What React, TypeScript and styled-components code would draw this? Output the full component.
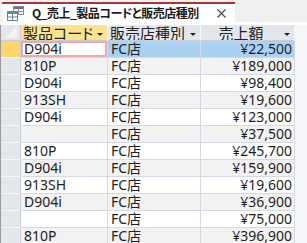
import React from 'react'
import styled, { createGlobalStyle } from 'styled-components'

const GlobalStyle = createGlobalStyle`
    html, body {
        margin: 0;
        padding: 0;
        background: #ffffff;
    }
    body {
        font-family: "Noto Sans", "Noto Sans CJK JP", sans-serif;
    }
`

const Window = styled.div`
    width: 307px;
    height: 243px;
    overflow: hidden;
    background: #ffffff;
`

const TabStrip = styled.div`
    display: flex;
    height: 22px;
    background: #f0f0f0;
    border-bottom: 3px solid #ffffff;
`

const Tab = styled.div`
    display: flex;
    align-items: center;
    box-sizing: border-box;
    width: 233px;
    height: 20px;
    margin: 2px 0 0 2px;
    padding: 0 0 0 5px;
    background: #ffffff;
    border-top: 2px solid #a4373a;
`

const TabTitle = styled.span`
    margin-left: 8px;
    font-family: "Noto Sans CJK JP", sans-serif;
    font-feature-settings: "palt";
    font-size: 12px;
    font-weight: 700;
    letter-spacing: -0.5px;
    line-height: 18px;
    color: #1a1a1a;
    white-space: nowrap;
`

const CloseButton = styled.span`
    display: flex;
    margin-left: auto;
    margin-right: 9px;
`

const Sheet = styled.div`
    display: grid;
    grid-template-columns: 20px 87px 93px 94px 1fr;
    border-left: 1px solid #9a9a9a;
`

const HeadCell = styled.div<{ $active?: boolean }>`
    display: flex;
    box-sizing: border-box;
    height: 16px;
    padding-left: 2px;
    background: ${p => (p.$active ? '#fce38f' : '#e4e6eb')};
    border-right: 1px solid #f7f8fa;
    border-bottom: 1px solid #c8cfda;
`

const HeadLabel = styled.span<{ $center?: boolean }>`
    flex: 1;
    min-width: 0;
    overflow: hidden;
    font-family: "Noto Sans CJK JP", sans-serif;
    font-feature-settings: "palt";
    font-size: 15px;
    line-height: 15px;
    color: #222;
    text-align: ${p => (p.$center ? 'center' : 'left')};
    white-space: nowrap;
`

const DropButton = styled.span`
    display: flex;
    align-items: center;
    justify-content: center;
    width: 15px;
    padding-top: 3px;
`

const Arrow = styled.span`
    width: 0;
    height: 0;
    border-left: 3px solid transparent;
    border-right: 3px solid transparent;
    border-top: 3px solid #222;
`

const SelectAll = styled.div`
    position: relative;
    box-sizing: border-box;
    height: 16px;
    background: #e4e6eb;
    border-right: 1px solid #c8cfda;
    border-bottom: 1px solid #c8cfda;
`

const Corner = styled.span`
    position: absolute;
    right: 3px;
    bottom: 2px;
    width: 0;
    height: 0;
    border-left: 12px solid transparent;
    border-bottom: 12px solid #f3f4f7;
`

const Selector = styled.div<{ $current?: boolean }>`
    box-sizing: border-box;
    height: 17px;
    background: ${p => (p.$current ? '#fcd56c' : '#e3e6eb')};
    border-right: 1px solid #c8cfda;
    border-bottom: 1px solid #f6f7f9;
`

const Cell = styled.div<{ $odd?: boolean; $selected?: boolean; $focus?: boolean; $right?: boolean }>`
    box-sizing: border-box;
    height: 17px;
    padding: ${p => (p.$right ? '0 2px 0 0' : '0 0 0 3px')};
    background: ${p => (p.$selected ? '#aad0f2' : p.$odd ? '#f2f2f2' : '#ffffff')};
    border-right: 1px solid #d3dae6;
    border-bottom: 1px solid #d3dae6;
    box-shadow: ${p => (p.$focus ? 'inset 0 0 0 2px #f4a7a9' : 'none')};
    font-size: 14px;
    line-height: 16px;
    color: #1e1e1e;
    text-align: ${p => (p.$right ? 'right' : 'left')};
    white-space: nowrap;
    overflow: hidden;
`

const Filler = styled.div<{ $head?: boolean }>`
    height: ${p => (p.$head ? '16px' : '17px')};
    background: #f6f7fb;
`

const rows = [
    ['D904i', 'FC店', '¥22,500'],
    ['810P', 'FC店', '¥189,000'],
    ['D904i', 'FC店', '¥98,400'],
    ['913SH', 'FC店', '¥19,600'],
    ['D904i', 'FC店', '¥123,000'],
    ['', 'FC店', '¥37,500'],
    ['810P', 'FC店', '¥245,700'],
    ['D904i', 'FC店', '¥159,900'],
    ['913SH', 'FC店', '¥19,600'],
    ['D904i', 'FC店', '¥36,900'],
    ['', 'FC店', '¥75,000'],
    ['810P', 'FC店', '¥396,900'],
]

function QueryIcon() {
    return (
        <svg width="17" height="15" viewBox="0 0 17 15">
            <rect x="6.5" y="0.5" width="10" height="8" fill="#fff" stroke="#7d8d99" />
            <rect x="7" y="1" width="9" height="2" fill="#8a6670" />
            <line x1="6.5" y1="5.5" x2="16.5" y2="5.5" stroke="#7d8d99" />
            <line x1="11.5" y1="3" x2="11.5" y2="8.5" stroke="#7d8d99" />
            <rect x="0.5" y="5.5" width="10" height="9" fill="#fff" stroke="#5f8aa0" />
            <rect x="1" y="6" width="9" height="2" fill="#5f8aa0" />
            <line x1="0.5" y1="11" x2="10.5" y2="11" stroke="#5f8aa0" />
            <line x1="5.5" y1="8" x2="5.5" y2="14.5" stroke="#5f8aa0" />
        </svg>
    )
}

function CloseIcon() {
    return (
        <svg width="9" height="9" viewBox="0 0 9 9">
            <path d="M0.5 0.5 L8.5 8.5 M8.5 0.5 L0.5 8.5" stroke="#444" strokeWidth="1.1" />
        </svg>
    )
}

const headers = ['製品コード', '販売店種別', '売上額']

export default function App() {
    return (
        <Window>
            <GlobalStyle />
            <TabStrip>
                <Tab>
                    <QueryIcon />
                    <TabTitle>Q_売上_製品コードと販売店種別</TabTitle>
                    <CloseButton>
                        <CloseIcon />
                    </CloseButton>
                </Tab>
            </TabStrip>
            <Sheet>
                <SelectAll>
                    <Corner />
                </SelectAll>
                {headers.map((h, i) => (
                    <HeadCell key={h} $active={i === 0}>
                        <HeadLabel $center={i === 2}>{h}</HeadLabel>
                        <DropButton>
                            <Arrow />
                        </DropButton>
                    </HeadCell>
                ))}
                <Filler $head />
                {rows.map((r, i) => (
                    <React.Fragment key={i}>
                        <Selector $current={i === 0} />
                        <Cell $odd={i % 2 === 1} $focus={i === 0}>{r[0]}</Cell>
                        <Cell $odd={i % 2 === 1} $selected={i === 0}>{r[1]}</Cell>
                        <Cell $odd={i % 2 === 1} $selected={i === 0} $right>{r[2]}</Cell>
                        <Filler />
                    </React.Fragment>
                ))}
            </Sheet>
        </Window>
    )
}
